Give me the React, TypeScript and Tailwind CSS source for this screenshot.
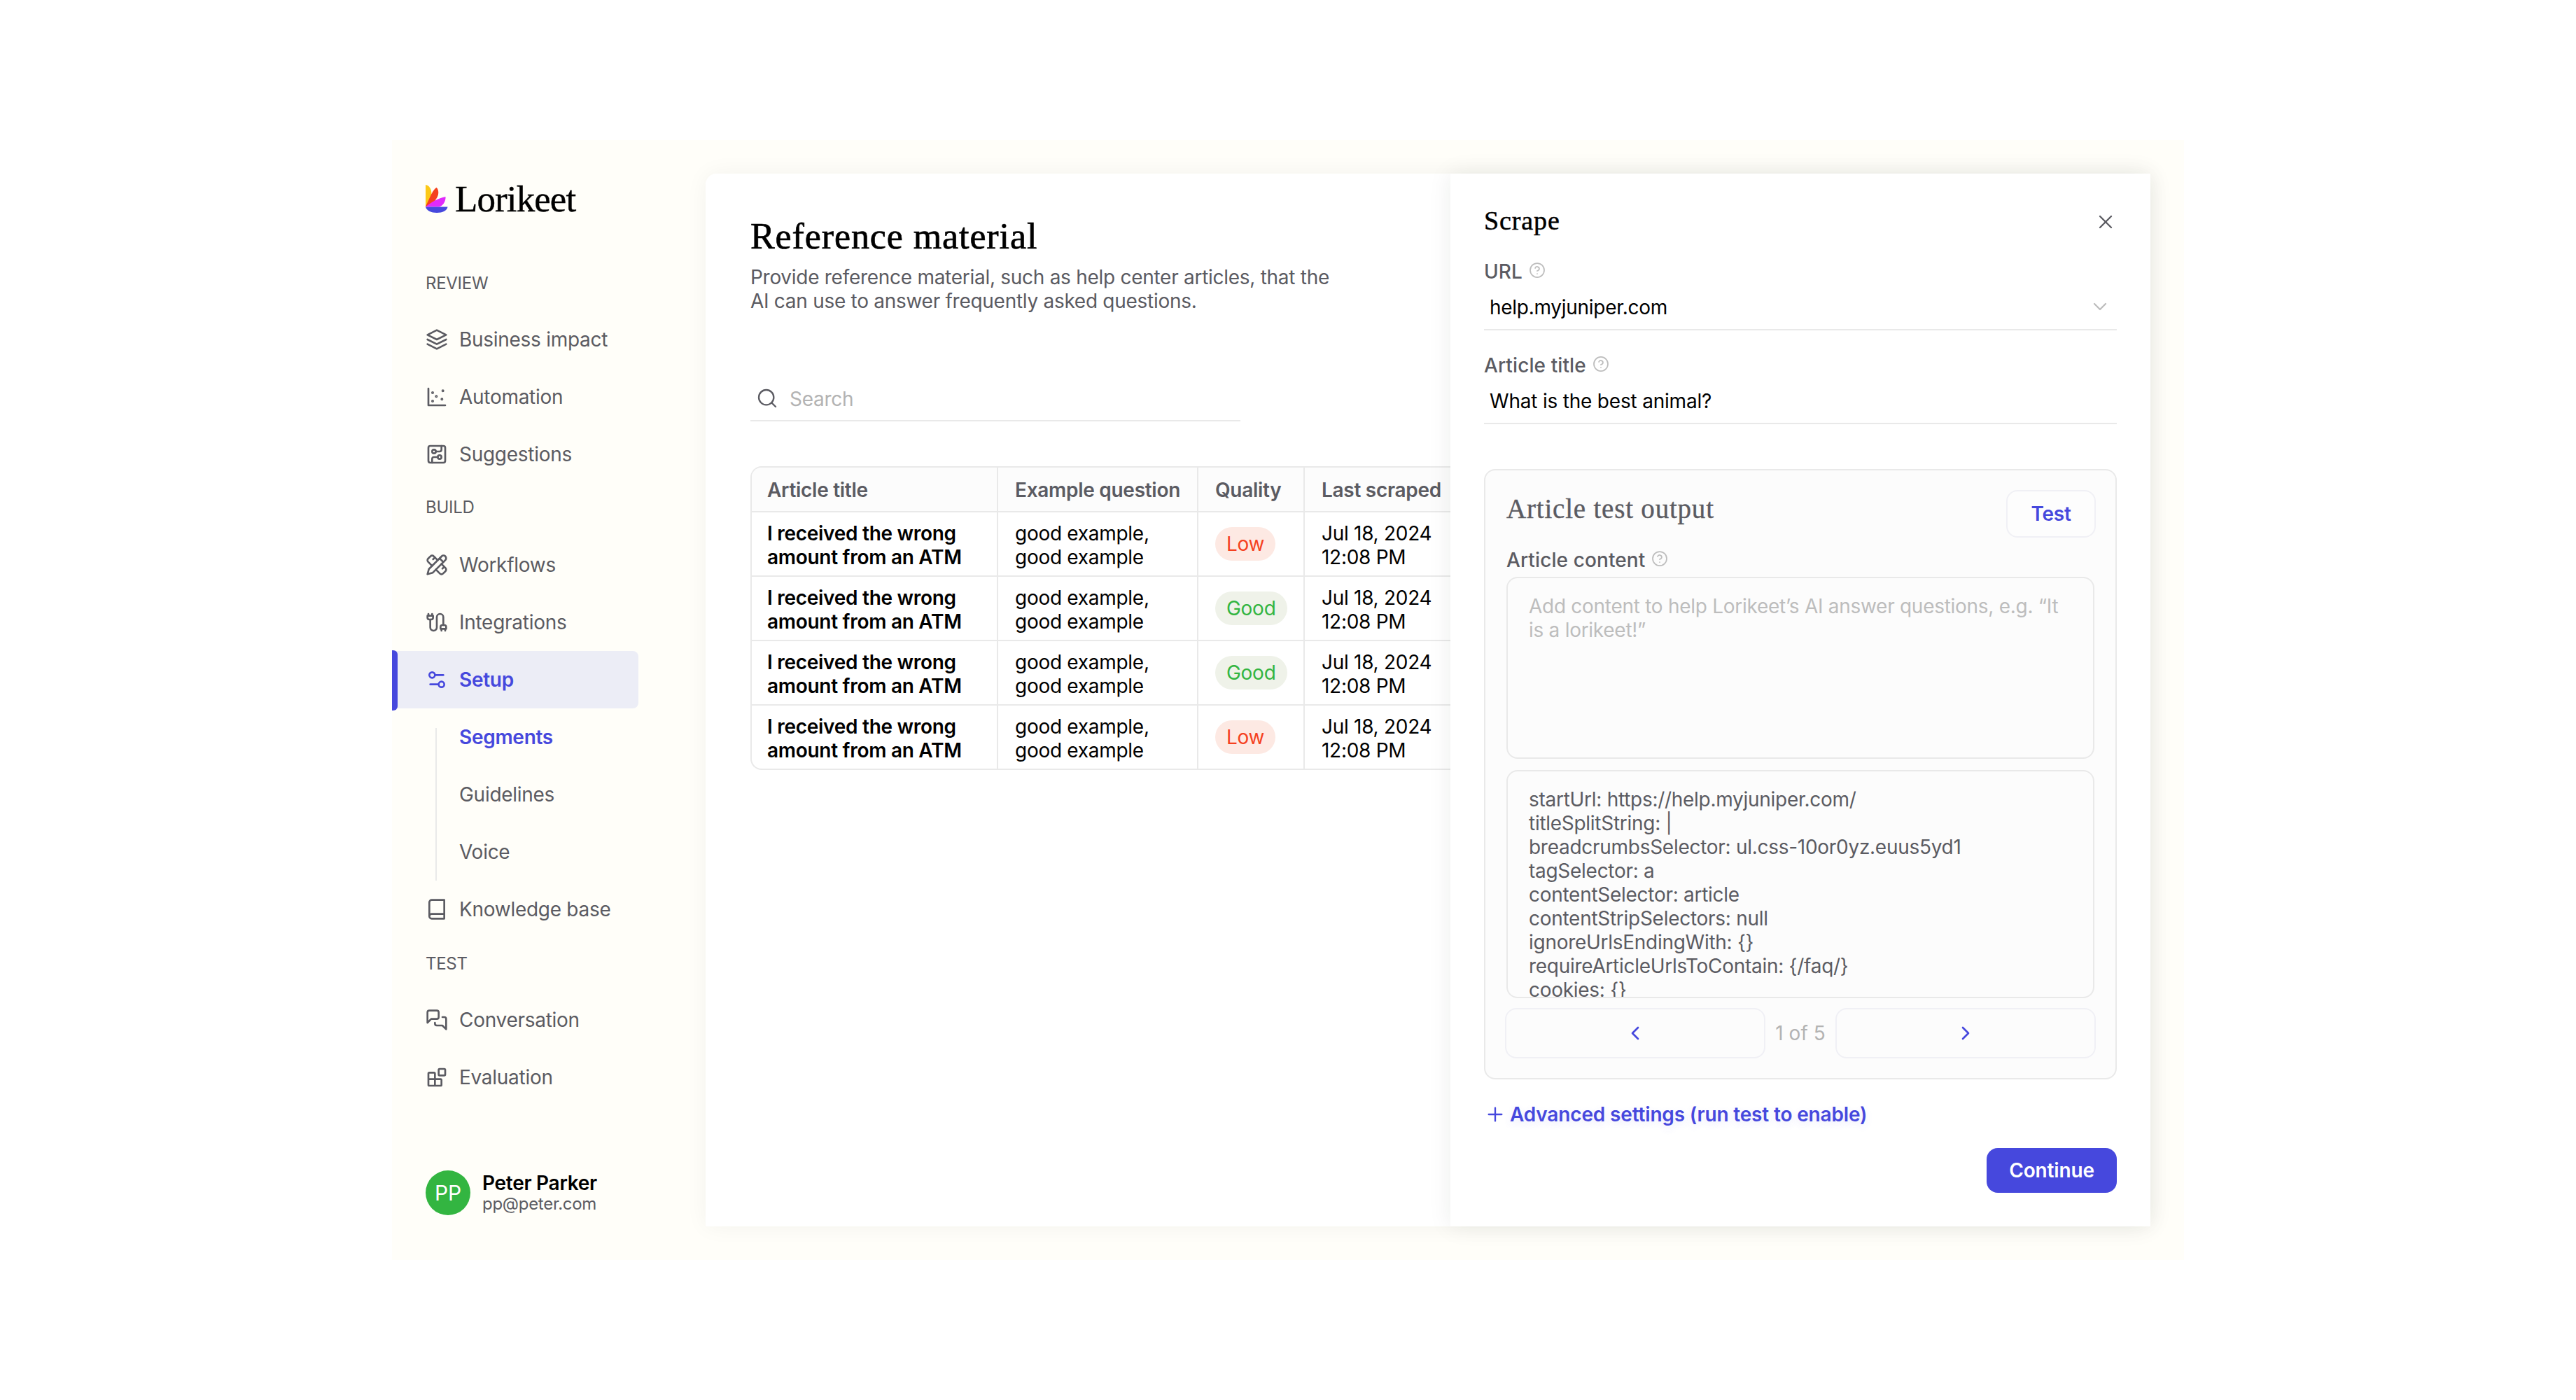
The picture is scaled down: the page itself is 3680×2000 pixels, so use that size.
import type { ReactNode } from 'react'
import { ChevronDown, ChevronLeft, ChevronRight, CircleHelp, CircuitBoard, Plus, Search, Settings2, X } from 'lucide-react'

const Svg = ({ children }: { children: ReactNode }) => (
  <svg
    width="32"
    height="32"
    viewBox="0 0 24 24"
    fill="none"
    stroke="currentColor"
    strokeWidth="2"
    strokeLinecap="round"
    strokeLinejoin="round"
  >
    {children}
  </svg>
)

const LayersIcon = () => (
  <Svg>
    <path d="m12 2-10 5 10 5 10-5-10-5Z" />
    <path d="m2 17 10 5 10-5" />
    <path d="m2 12 10 5 10-5" />
  </Svg>
)

const ScatterIcon = () => (
  <Svg>
    <circle cx="7.5" cy="7.5" r=".9" strokeWidth="1.2" />
    <circle cx="18.5" cy="5.5" r=".9" strokeWidth="1.2" />
    <circle cx="11.5" cy="11.5" r=".9" strokeWidth="1.2" />
    <circle cx="7.5" cy="16.5" r=".9" strokeWidth="1.2" />
    <circle cx="17.5" cy="14.5" r=".9" strokeWidth="1.2" />
    <path d="M3 3v18h18" />
  </Svg>
)

const PencilRulerIcon = () => (
  <Svg>
    <path d="m15 5 4 4" />
    <path d="M13 7 8.7 2.7a2.41 2.41 0 0 0-3.4 0L2.7 5.3a2.41 2.41 0 0 0 0 3.4L7 13" />
    <path d="m8 6 2-2" />
    <path d="m2 22 5.500-1.500L21.170 6.830a2.820 2.820 0 0 0-4-4L3.500 16.500Z" />
    <path d="m18 16 2-2" />
    <path d="m17 11 4.300 4.300c.94.94.94 2.460 0 3.400l-2.600 2.600c-.94.94-2.460.94-3.400 0L11 17" />
  </Svg>
)

const CableIcon = () => (
  <Svg>
    <path d="M4 9a2 2 0 0 1-2-2V5h6v2a2 2 0 0 1-2 2Z" />
    <path d="M3 5V3" />
    <path d="M7 5V3" />
    <path d="M19 15V6.500a3.500 3.500 0 0 0-7 0v11a3.500 3.500 0 0 1-7 0V9" />
    <path d="M17 21v-2" />
    <path d="M21 21v-2" />
    <path d="M22 19h-6v-2a2 2 0 0 1 2-2h2a2 2 0 0 1 2 2Z" />
  </Svg>
)

const BookIcon = () => (
  <Svg>
    <path d="M4 19.5v-15A2.5 2.5 0 0 1 6.5 2H20v20H6.5a2.5 2.5 0 0 1 0-5H20" />
  </Svg>
)

const MessagesIcon = () => (
  <Svg>
    <path d="M14 9a2 2 0 0 1-2 2H6l-4 4V4c0-1.1.9-2 2-2h8a2 2 0 0 1 2 2v5Z" />
    <path d="M18 9h2a2 2 0 0 1 2 2v11l-4-4h-6a2 2 0 0 1-2-2v-1" />
  </Svg>
)

const BlocksIcon = () => (
  <Svg>
    <rect width="7" height="7" x="14" y="3" rx="1" />
    <path d="M10 21V8a1 1 0 0 0-1-1H4a1 1 0 0 0-1 1v12a1 1 0 0 0 1 1h12a1 1 0 0 0 1-1v-5a1 1 0 0 0-1-1H3" />
  </Svg>
)

const rows = ['Low', 'Good', 'Good', 'Low']

const config = [
  'startUrl: https://help.myjuniper.com/',
  'titleSplitString: |',
  'breadcrumbsSelector: ul.css-10or0yz.euus5yd1',
  'tagSelector: a',
  'contentSelector: article',
  'contentStripSelectors: null',
  'ignoreUrlsEndingWith: {}',
  'requireArticleUrlsToContain: {/faq/}',
  'cookies: {}',
]

function NavItem({ icon, label }: { icon: ReactNode; label: string }) {
  return (
    <div className="flex h-[82px] items-center gap-4 pl-12">
      {icon}
      <span>{label}</span>
    </div>
  )
}

function Logo() {
  return (
    <div className="flex h-10 items-center gap-[10px] pl-12">
      <svg width="32" height="40" viewBox="0 0 32 40">
        <path d="M0 31.500V0C5 .5 8.500 6 8.500 13.500 8.500 20 5 25 0 31.500Z" fill="#fcc917" />
        <path d="M0 31.500C16 27 20 12 15.500 4 10 8 8 14 0 31.500Z" fill="#f5411e" />
        <path d="M15.500 4C19 7 19 13 16.500 18L10 27 0 31.500 9 13Z" fill="#f5411e" />
        <path d="M0 31.500C8 25 18 19 28.500 17 29 24 24 31.500 18 31.500Z" fill="#e02bfb" />
        <path d="M0 31.500H31.500C31 36.500 24 40 16 40 8 40 1 36.500 0 31.500Z" fill="#4648dd" />
      </svg>
      <span className="font-['Liberation_Serif',serif] text-[53px] leading-[40px] tracking-[-0.9px] text-black [-webkit-text-stroke:0.4px]">
        Lorikeet
      </span>
    </div>
  )
}

function Sidebar() {
  return (
    <aside className="flex w-[448px] shrink-0 flex-col pt-16 pb-16">
      <Logo />
      <div className="mt-[86px] mb-6 pl-12 text-2xl leading-[30px]">REVIEW</div>
      <NavItem icon={<LayersIcon />} label="Business impact" />
      <NavItem icon={<ScatterIcon />} label="Automation" />
      <NavItem icon={<CircuitBoard size={32} />} label="Suggestions" />

      <div className="mt-5 mb-[26px] pl-12 text-2xl leading-[30px]">BUILD</div>
      <NavItem icon={<PencilRulerIcon />} label="Workflows" />
      <NavItem icon={<CableIcon />} label="Integrations" />
      <div className="relative flex h-[82px] w-[352px] items-center gap-4 rounded-r-lg bg-[#ecedf6] pl-12 font-semibold text-[#4648dd]">
        <div className="absolute top-[-1px] left-0 h-[86px] w-2 rounded-r-[6px] bg-[#4648dd]" />
        <Settings2 size={32} />
        <span>Setup</span>
      </div>
      <div className="flex pl-[62px]">
        <div className="mt-7 w-[2px] bg-[#e9e9e9]" />
        <div className="pl-8">
          <div className="flex h-[82px] items-center font-semibold text-[#4648dd]">Segments</div>
          <div className="flex h-[82px] items-center">Guidelines</div>
          <div className="flex h-[82px] items-center">Voice</div>
        </div>
      </div>
      <NavItem icon={<BookIcon />} label="Knowledge base" />

      <div className="mt-[22px] mb-6 pl-12 text-2xl leading-[30px]">TEST</div>
      <NavItem icon={<MessagesIcon />} label="Conversation" />
      <NavItem icon={<BlocksIcon />} label="Evaluation" />

      <div className="mt-auto flex items-center gap-[17px] pl-12">
        <div className="flex size-16 items-center justify-center rounded-full bg-[#33b541] text-[30px] text-white">
          PP
        </div>
        <div>
          <div className="leading-8 font-semibold text-black">Peter Parker</div>
          <div className="text-2xl leading-7">pp@peter.com</div>
        </div>
      </div>
    </aside>
  )
}

function Badge({ value }: { value: string }) {
  return (
    <span
      className={`flex h-12 items-center rounded-full px-4 ${
        value === 'Low' ? 'bg-[#fde9e3] text-[#f5411e]' : 'bg-[#eff2e9] text-[#33b541]'
      }`}
    >
      {value}
    </span>
  )
}

function Main() {
  return (
    <main className="w-[1064px] shrink-0 overflow-hidden rounded-tl-2xl bg-white pt-[60px] pl-16">
      <h1 className="font-['Liberation_Serif',serif] text-[52px] leading-[60px] tracking-[0.9px] text-black [-webkit-text-stroke:0.7px]">
        Reference material
      </h1>
      <p className="mt-[11px] w-[860px]">
        Provide reference material, such as help center articles, that the
        <br />
        AI can use to answer frequently asked questions.
      </p>
      <div className="mt-[91px] flex h-16 w-[700px] items-center gap-4 border-b-2 border-[#e9e9e9] pl-2">
        <Search size={32} strokeWidth={1.75} />
        <span className="pt-[2px] text-[#b3b3b3]">Search</span>
      </div>

      <div className="mt-16 rounded-l-2xl border-2 border-r-0 border-[#e9e9e9] text-black">
        <div className="grid h-16 grid-cols-[352px_286px_152px_1fr] rounded-tl-[14px] border-b-2 border-[#e9e9e9] bg-[#fcfcfc] font-semibold text-[#5b5b62]">
          <div className="flex items-center border-r-2 border-[#e9e9e9] pt-[2px] pl-[22px]">Article title</div>
          <div className="flex items-center border-r-2 border-[#e9e9e9] pt-[2px] pl-6">Example question</div>
          <div className="flex items-center border-r-2 border-[#e9e9e9] pt-[2px] pl-6">Quality</div>
          <div className="flex items-center pt-[2px] pl-6">Last scraped</div>
        </div>
        {rows.map((quality, i) => (
          <div
            key={i}
            className="grid h-[92px] grid-cols-[352px_286px_152px_1fr] border-b-2 border-[#e9e9e9] last:h-[90px] last:border-b-0"
          >
            <div className="border-r-2 border-[#e9e9e9] pt-[13px] pl-[22px] font-semibold">
              I received the wrong
              <br />
              amount from an ATM
            </div>
            <div className="border-r-2 border-[#e9e9e9] pt-[13px] pl-6">
              good example,
              <br />
              good example
            </div>
            <div className="flex items-center border-r-2 border-[#e9e9e9] pl-6">
              <Badge value={quality} />
            </div>
            <div className="pt-[13px] pl-6">
              Jul 18, 2024
              <br />
              12:08 PM
            </div>
          </div>
        ))}
      </div>
    </main>
  )
}

function Label({ text }: { text: string }) {
  return (
    <div className="flex items-center gap-[9px] font-medium tracking-[0.1px]">
      {text}
      <CircleHelp size={24} strokeWidth={1.75} className="mb-1 text-[#bdbdbd]" />
    </div>
  )
}

function Drawer() {
  return (
    <section className="relative flex w-[1000px] shrink-0 flex-col bg-white px-12 pt-[45px] shadow-[0_0_32px_rgba(20,40,0,0.08)]">
      <div className="flex h-11 justify-between">
        <h2 className="font-['Liberation_Serif',serif] text-[38px] leading-[44px] tracking-[0.9px] text-black [-webkit-text-stroke:0.5px]">
          Scrape
        </h2>
        <X size={32} strokeWidth={1.75} className="mt-2" />
      </div>

      <div className="mt-[34px]">
        <Label text="URL" />
        <div className="flex h-[67px] items-center justify-between border-b-2 border-[#e9e9e9] pr-2 pl-2 text-black">
          <span className="pt-[3px]">help.myjuniper.com</span>
          <ChevronDown size={32} strokeWidth={1.75} className="text-[#bdbdbd]" />
        </div>
      </div>
      <div className="mt-[33px]">
        <Label text="Article title" />
        <div className="flex h-[67px] items-center border-b-2 border-[#e9e9e9] pl-2 text-black">
          <span className="pt-[3px] tracking-[-0.2px]">What is the best animal?</span>
        </div>
      </div>

      <div className="mt-16 rounded-2xl border-2 border-[#e9e9e9] bg-[#fcfcfc] px-[30px] pt-7 pb-7">
        <div className="mr-[-2px] flex justify-between">
          <h3 className="mt-[5px] font-['Liberation_Serif',serif] text-[39px] leading-[44px] tracking-[0.8px] [-webkit-text-stroke:0.4px]">
            Article test output
          </h3>
          <button className="h-[68px] w-32 rounded-2xl border-2 border-[#f0f0f5] bg-[#fdfdfd] font-semibold text-[#4648dd]">
            Test
          </button>
        </div>
        <div className="mt-[15px]">
          <Label text="Article content" />
        </div>
        <div className="mt-[7px] h-[260px] rounded-2xl border-2 border-[#e9e9e9] px-[30px] pt-[23px] text-[#bdbdbd]">
          Add content to help Lorikeet’s AI answer questions, e.g. “It
          <br />
          is a lorikeet!”
        </div>
        <div className="mt-4 h-[326px] overflow-hidden rounded-2xl border-2 border-[#e9e9e9] px-[30px] pt-[23px]">
          {config.map((line) => (
            <div key={line}>{line}</div>
          ))}
        </div>
        <div className="mx-[-2px] mt-3.5 flex items-center justify-between">
          <button className="flex h-[72px] w-[372px] items-center justify-center rounded-2xl border-2 border-[#f0f0f5] text-[#4648dd]">
            <ChevronLeft size={32} />
          </button>
          <span className="tracking-normal text-[#b3b3b3]">1 of 5</span>
          <button className="flex h-[72px] w-[372px] items-center justify-center rounded-2xl border-2 border-[#f0f0f5] text-[#4648dd]">
            <ChevronRight size={32} />
          </button>
        </div>
      </div>

      <div className="mt-[33px] flex items-center gap-[5px] font-semibold text-[#4648dd]">
        <Plus size={32} strokeWidth={1.75} />
        <span className="tracking-[-0.16px] [text-shadow:0_4px_12px_rgba(70,72,221,0.12)]">
          Advanced settings (run test to enable)
        </span>
      </div>
      <button className="mt-[31px] h-16 w-[186px] self-end rounded-2xl bg-[#4648dd] font-semibold tracking-[-0.16px] text-white">
        Continue
      </button>
    </section>
  )
}

export default function App() {
  return (
    <div className="flex h-[2000px] w-[3680px] items-center justify-center bg-white font-['Inter',sans-serif] text-[28px] leading-[34px] tracking-[-0.01em] text-[#5b5b62]">
      <div className="flex h-[1600px] w-[2560px] bg-[#fffef9]">
        <Sidebar />
        <div className="my-12 flex rounded-tl-2xl shadow-[0_0_32px_rgba(20,20,0,0.05)]">
          <Main />
          <Drawer />
        </div>
      </div>
    </div>
  )
}
